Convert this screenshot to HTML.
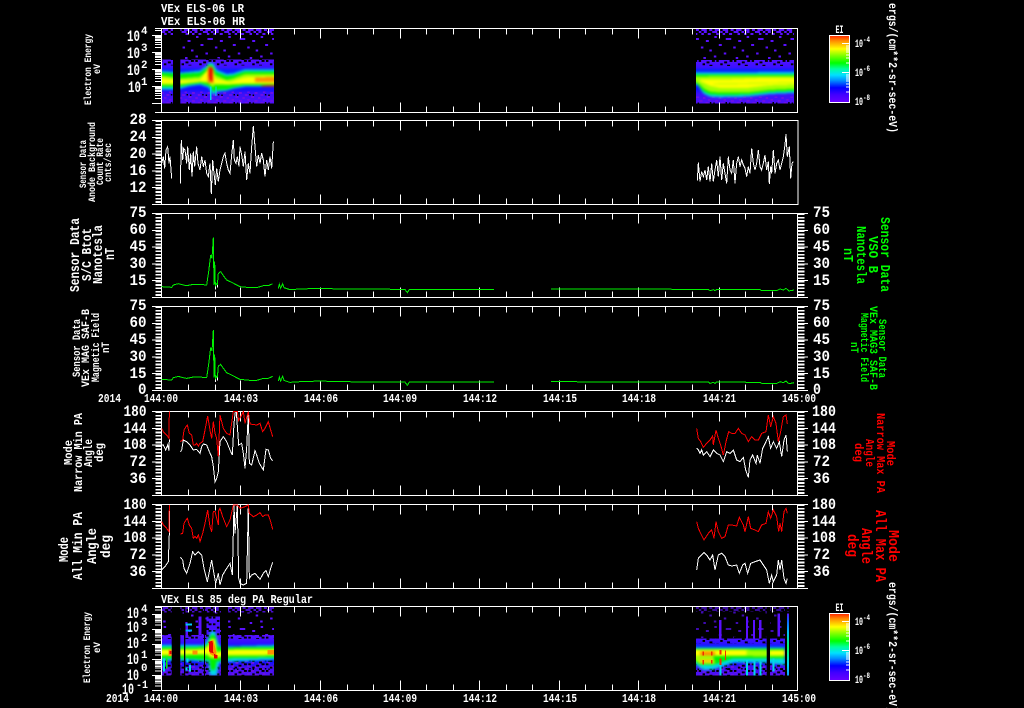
<!DOCTYPE html>
<html lang="en"><head><meta charset="utf-8"><title>VEx ELS summary plot</title>
<style>
html,body{margin:0;padding:0;background:#000;width:1024px;height:708px;overflow:hidden}
svg{display:block;shape-rendering:crispEdges}
text{font-family:"Liberation Mono","DejaVu Sans Mono",monospace;fill:#fff;font-weight:bold}
.n{font-size:16px}.t{font-size:12px}.s{font-size:11px}
.g{fill:#0f0}.r{fill:#f00}
</style></head><body>
<svg width="1024" height="708" viewBox="0 0 1024 708" xmlns="http://www.w3.org/2000/svg">
<defs>
<filter id="bl" x="-5%" y="-20%" width="110%" height="140%" color-interpolation-filters="sRGB"><feGaussianBlur stdDeviation="4"/></filter>
<pattern id="dn" patternUnits="userSpaceOnUse" width="64" height="18" x="0" y="87"><g fill="#5a10ff"><rect x="0" y="0" width="16" height="6"/><rect x="24" y="0" width="8" height="6"/><rect x="40" y="0" width="16" height="6"/><rect x="8" y="6" width="8" height="6"/><rect x="32" y="6" width="16" height="6"/><rect x="56" y="6" width="8" height="6"/><rect x="0" y="12" width="8" height="6"/><rect x="20" y="12" width="8" height="6"/><rect x="44" y="12" width="8" height="6"/></g></pattern>
<pattern id="sp" patternUnits="userSpaceOnUse" width="97" height="75" x="0" y="105"><g fill="#5a10ff"><rect x="6" y="3" width="8" height="6"/><rect x="40" y="9" width="16" height="6"/><rect x="78" y="15" width="8" height="6"/><rect x="20" y="27" width="8" height="6"/><rect x="62" y="34" width="8" height="6"/><rect x="88" y="44" width="8" height="6"/><rect x="34" y="52" width="8" height="6"/><rect x="4" y="62" width="8" height="6"/><rect x="70" y="66" width="8" height="6"/></g></pattern>
<pattern id="bk" patternUnits="userSpaceOnUse" width="53" height="20" x="0" y="0"><g fill="#000"><rect x="3" y="0" width="8" height="6"/><rect x="27" y="4" width="8" height="6"/><rect x="43" y="0" width="8" height="6"/><rect x="14" y="10" width="8" height="6"/><rect x="36" y="14" width="8" height="6"/></g></pattern>
<pattern id="mt" patternUnits="userSpaceOnUse" width="47" height="24" x="0" y="0"><g fill="#6a10e8"><rect x="2" y="0" width="8" height="6"/><rect x="22" y="3" width="8" height="6"/><rect x="36" y="9" width="8" height="6"/><rect x="12" y="12" width="8" height="6"/><rect x="30" y="18" width="8" height="6"/></g><g fill="#000"><rect x="42" y="18" width="5" height="5"/><rect x="6" y="19" width="5" height="5"/></g></pattern>
<linearGradient id="b1" gradientUnits="userSpaceOnUse" x1="0" x2="0" y1="175" y2="311"><stop offset="0" stop-color="#5a10ff"/><stop offset=".2" stop-color="#3a10ff"/><stop offset=".26" stop-color="#0a20ff"/><stop offset=".68" stop-color="#1010ff"/><stop offset=".78" stop-color="#3a10f8"/><stop offset="1" stop-color="#5010f8"/></linearGradient>
<linearGradient id="b7" gradientUnits="userSpaceOnUse" x1="0" x2="0" y1="135" y2="257"><stop offset="0" stop-color="#5a10ff"/><stop offset=".2" stop-color="#3010ff"/><stop offset=".28" stop-color="#0a20ff"/><stop offset=".66" stop-color="#1010ff"/><stop offset=".8" stop-color="#4010f0"/><stop offset="1" stop-color="#5010f8"/></linearGradient>
<linearGradient id="cb" x1="0" x2="0" y1="0" y2="1"><stop offset="0" stop-color="#ff2400"/><stop offset=".08" stop-color="#ff8c00"/><stop offset=".2" stop-color="#ffff00"/><stop offset=".3" stop-color="#80ff00"/><stop offset=".41" stop-color="#00ff00"/><stop offset=".5" stop-color="#00ffa0"/><stop offset=".59" stop-color="#00e0ff"/><stop offset=".67" stop-color="#0090ff"/><stop offset=".78" stop-color="#0000ff"/><stop offset=".88" stop-color="#4000ff"/><stop offset="1" stop-color="#6a00ff"/></linearGradient>
<linearGradient id="col" gradientUnits="userSpaceOnUse" x1="0" x2="0" y1="70" y2="257"><stop offset="0" stop-color="#5a10ff"/><stop offset=".12" stop-color="#1060ff"/><stop offset=".3" stop-color="#00c0ff"/><stop offset=".55" stop-color="#00ff60"/><stop offset=".82" stop-color="#00d8ff"/><stop offset="1" stop-color="#10a0ff"/></linearGradient>
<clipPath id="c1l"><rect x="485" y="87" width="34" height="224"/><rect x="541" y="87" width="281" height="224"/></clipPath>
<clipPath id="c1r"><rect x="48" y="87" width="294" height="224"/></clipPath>
<clipPath id="c7l"><rect x="485" y="50" width="30" height="207"/><rect x="541" y="50" width="11" height="207"/><rect x="556" y="50" width="56" height="207"/><rect x="615" y="50" width="48" height="207"/><rect x="684" y="50" width="138" height="207"/></clipPath>
<clipPath id="c7r"><rect x="48" y="50" width="212" height="207"/><rect x="270" y="50" width="45" height="207"/><rect x="321" y="50" width="6" height="207"/></clipPath>
<path id="xt" fill="none" stroke="#fff" d="M188.5 0v6M215.5 0v6M240.5 0v10M268.5 0v6M294.5 0v6M320.5 0v10M347.5 0v6M373.5 0v6M400.5 0v10M426.5 0v6M453.5 0v6M479.5 0v10M506.5 0v6M532.5 0v6M559.5 0v10M585.5 0v6M612.5 0v6M638.5 0v10M665.5 0v6M692.5 0v6M719.5 0v10M745.5 0v6M772.5 0v6M188.5 84v-6M215.5 84v-6M240.5 84v-10M268.5 84v-6M294.5 84v-6M320.5 84v-10M347.5 84v-6M373.5 84v-6M400.5 84v-10M426.5 84v-6M453.5 84v-6M479.5 84v-10M506.5 84v-6M532.5 84v-6M559.5 84v-10M585.5 84v-6M612.5 84v-6M638.5 84v-10M665.5 84v-6M692.5 84v-6M719.5 84v-10M745.5 84v-6M772.5 84v-6"/>
<g id="lad" fill="none" stroke="#fff">
<path stroke-width="6" stroke-dasharray="1.7 1.66" d="M158.5 0v84"/>
<path d="M152 0h9M152 16.8h9M152 33.6h9M152 50.4h9M152 67.2h9M152 84h9"/>
</g>
<g id="rad" fill="none" stroke="#fff">
<path stroke-width="7" stroke-dasharray="1.7 1.66" d="M801 0v84"/>
<path d="M798 0h10M798 16.8h10M798 33.6h10M798 50.4h10M798 67.2h10M798 84h10"/>
</g>
<path id="dec1" fill="none" stroke="#fff" d="M152 0h9M155 -5.1h6M155 -8.1h6M155 -10.2h6M155 -11.9h6M155 -13.2h6M155 -14.4h6M155 -15.4h6M155 -16.2h6"/>
<path id="dec7" fill="none" stroke="#fff" d="M152 0h9M155 -4.6h6M155 -7.3h6M155 -9.1h6M155 -10.6h6M155 -11.8h6M155 -12.9h6M155 -13.8h6M155 -14.5h6"/>
</defs>
<rect width="1024" height="708" fill="#000"/>

<!-- top titles -->
<text class="t" x="161" y="12" textLength="83" lengthAdjust="spacingAndGlyphs">VEx ELS-06 LR</text>
<text class="t" x="161" y="25" textLength="84" lengthAdjust="spacingAndGlyphs">VEx ELS-06 HR</text>
<text class="t" x="161" y="603" textLength="152" lengthAdjust="spacingAndGlyphs">VEx ELS 85 deg PA Regular</text>

<!-- spectrogram panel 1 left -->
<g transform="scale(.33333)"><g clip-path="url(#c1l)">
<rect x="485" y="87" width="340" height="18" fill="url(#dn)"/>
<rect x="541" y="105" width="281" height="75" fill="url(#sp)"/>
<rect x="485" y="178" width="340" height="133" fill="url(#b1)"/>
<rect x="485" y="174" width="340" height="22" fill="url(#bk)"/>
<rect x="485" y="275" width="340" height="36" fill="url(#mt)"/>
<g filter="url(#bl)">
<polygon fill="#00d8e8" points="470,212 541,218 600,212 620,198 625,188 640,190 650,210 680,222 700,220 735,208 840,208 840,258 735,260 700,266 680,272 650,275 640,285 625,262 600,254 570,258 541,266 520,268 470,268"/>
<polygon fill="#00f000" points="470,217 541,222 600,218 620,204 625,194 638,196 648,216 680,228 700,226 735,214 840,214 840,256 735,256 700,262 680,268 652,270 640,275 628,258 600,250 570,254 541,260 470,262"/>
<polygon fill="#a0ff00" points="470,224 541,235 600,230 618,215 625,198 638,200 645,225 680,240 700,235 735,222 840,222 840,252 735,252 700,254 680,255 645,255 638,262 626,250 600,246 570,250 541,254 470,255"/>
<polygon fill="#ffff00" points="470,232 541,242 600,240 620,212 640,212 645,236 690,246 735,232 840,228 840,250 735,250 690,252 645,250 636,252 622,245 600,245 541,250 470,250"/>
<polygon fill="#ff9000" points="622,205 640,205 640,250 622,248"/>
<polygon fill="#ff9000" points="765,233 840,230 840,246 765,246"/>
<polygon fill="#e80000" points="627,200 637,203 637,245 628,240"/>
<polygon fill="#f03000" points="785,256 840,255 840,260 785,259"/>
</g>
<path stroke="#00d8e8" stroke-width="4" d="M632 260v40M648 260v28"/>
</g></g>

<!-- spectrogram panel 1 right -->
<g transform="translate(680,0) scale(.33333)"><g clip-path="url(#c1r)">
<rect x="48" y="87" width="294" height="18" fill="url(#dn)"/>
<rect x="48" y="105" width="294" height="75" fill="url(#sp)"/>
<rect x="48" y="180" width="294" height="131" fill="url(#b1)"/>
<rect x="48" y="176" width="294" height="22" fill="url(#bk)"/>
<rect x="48" y="290" width="294" height="21" fill="url(#mt)"/>
<g filter="url(#bl)">
<polygon fill="#00d8e8" points="30,218 360,216 360,278 270,282 200,290 120,292 90,290 70,280 55,258 30,245"/>
<polygon fill="#00f000" points="30,224 360,224 360,272 270,276 200,284 120,285 90,283 70,274 55,255 30,240"/>
<polygon fill="#a0ff00" points="30,230 120,228 360,228 360,266 270,270 200,278 120,278 90,275 70,265 55,250 30,238"/>
<polygon fill="#ffff00" points="60,238 150,238 250,234 360,234 360,253 270,256 200,264 150,264 120,264 90,258 70,248 60,244"/>
<polygon fill="#c8ff00" points="100,250 340,246 340,250 100,254"/>
</g>
</g></g>

<!-- spectrogram panel 7 left -->
<g transform="translate(0,590) scale(.33333)"><g clip-path="url(#c7l)">
<rect x="485" y="50" width="340" height="18" fill="url(#dn)" opacity=".8"/>
<rect x="485" y="68" width="340" height="67" fill="url(#sp)"/>
<rect x="485" y="135" width="340" height="122" fill="url(#b7)"/>
<rect x="485" y="125" width="340" height="22" fill="url(#bk)"/>
<rect x="485" y="212" width="340" height="45" fill="url(#mt)"/>
<rect x="485" y="212" width="340" height="45" fill="url(#bk)"/>
<rect x="620" y="80" width="40" height="55" fill="#4a10ff"/>
<rect x="620" y="80" width="40" height="55" fill="url(#bk)"/>
<path stroke="#5a10ff" stroke-width="8" d="M600 80v55M560 100v35"/>
<rect x="556" y="100" width="20" height="6" fill="#00c8ff"/>
<rect x="556" y="118" width="20" height="6" fill="#00a0ff"/>
<g filter="url(#bl)">
<polygon fill="#00d8e8" points="470,165 612,165 625,145 632,125 645,125 655,160 663,172 684,170 840,165 840,208 684,215 663,215 656,225 650,257 630,257 625,215 580,212 541,212 470,212"/>
<polygon fill="#00f000" points="470,172 612,170 625,160 632,135 645,135 652,170 684,172 840,170 840,202 684,205 650,215 645,240 633,240 628,210 541,205 470,205"/>
<polygon fill="#a0ff00" points="470,178 612,176 628,160 632,145 645,145 650,185 684,178 840,176 840,197 684,198 650,205 632,205 620,195 470,197"/>
<polygon fill="#ffff00" points="470,180 612,180 628,165 632,150 645,150 650,190 684,180 840,180 840,193 684,193 650,200 632,198 620,190 470,195"/>
</g>
<g fill="#ff9000"><polygon points="505,178 515,178 515,198 505,198"/><polygon points="578,182 592,182 592,193 578,193"/><polygon points="626,155 640,150 650,190 640,198 628,190"/><polygon points="802,180 822,180 822,193 802,193"/></g>
<g fill="#e80000"><polygon points="626,155 638,152 640,190 628,186"/><polygon points="642,192 652,195 652,205 642,205"/><polygon points="508,183 515,183 515,192 508,192"/></g>
<path stroke="#00d8e8" stroke-width="6" d="M562 205v12M570 225v20M560 232v10M492 205v40"/>
<path stroke="#00f000" stroke-width="4" d="M500 205v30"/>
</g></g>

<!-- spectrogram panel 7 right -->
<g transform="translate(680,590) scale(.33333)"><g clip-path="url(#c7r)">
<rect x="48" y="50" width="280" height="14" fill="url(#dn)" opacity=".6"/>
<rect x="48" y="64" width="280" height="80" fill="url(#sp)" opacity=".7"/>
<rect x="48" y="145" width="280" height="112" fill="url(#b7)"/>
<rect x="48" y="140" width="280" height="20" fill="url(#bk)"/>
<rect x="48" y="212" width="280" height="45" fill="url(#mt)"/>
<rect x="48" y="212" width="280" height="45" fill="url(#bk)"/>
<path stroke="#5a10ff" stroke-width="7" d="M121 90v55M201 80v65M222 90v55M241 90v55M296 70v70"/>
<g filter="url(#bl)">
<polygon fill="#00d8e8" points="30,172 315,172 315,225 260,218 160,218 100,238 70,240 30,212"/>
<polygon fill="#00f000" points="30,175 315,175 315,205 160,205 100,225 60,225 30,205"/>
<polygon fill="#a0ff00" points="30,178 315,180 315,200 160,198 100,198 105,222 60,222 30,198"/>
<polygon fill="#ffff00" points="30,180 200,180 200,197 30,197"/>
<polygon fill="#ffff00" points="270,182 315,182 315,195 270,195"/>
<rect x="60" y="184" width="45" height="12" fill="#ff9000"/><rect x="60" y="208" width="40" height="10" fill="#ffc800"/>
</g>
<g fill="#f03000"><rect x="68" y="184" width="4" height="12"/><rect x="68" y="210" width="4" height="14"/><rect x="93" y="184" width="4" height="12"/><rect x="93" y="210" width="4" height="10"/><rect x="119" y="180" width="5" height="14"/><rect x="119" y="205" width="5" height="30"/><rect x="135" y="182" width="3" height="28"/></g>
<path stroke="#00d8e8" stroke-width="6" d="M122 225v32M201 210v47M224 215v42M242 215v42M280 205v40"/>
<rect x="321" y="70" width="6" height="187" fill="url(#col)"/>
</g></g>

<!-- panel frames -->
<g fill="none" stroke="#fff">
<path d="M155 28.5H797.5V112.5H155M161.5 28.5V112.5"/>
<path d="M155 120.5H798V204.5H155M161.5 120.5V204.5"/>
<path d="M152 213.5H808M152 297.5H808M161.5 213.5V297.5M797.5 213.5V297.5"/>
<path d="M152 306.5H808M152 390.5H808M161.5 306.5V390.5M797.5 306.5V390.5"/>
<path d="M152 411.5H808M152 495.5H808M161.5 411.5V495.5M797.5 411.5V495.5"/>
<path d="M152 504.5H808M152 588.5H808M161.5 504.5V588.5M797.5 504.5V588.5"/>
<path d="M155 606.5H797.5V690.5H155M161.5 606.5V690.5"/>
</g>
<use href="#xt" y="28.5"/><use href="#xt" y="120.5"/><use href="#xt" y="213.5"/><use href="#xt" y="306.5"/><use href="#xt" y="411.5"/><use href="#xt" y="504.5"/><use href="#xt" y="606.5"/>

<!-- left ladders -->
<use href="#lad" y="120.5"/><use href="#lad" y="213.5"/><use href="#lad" y="306.5"/><use href="#lad" y="411.5"/><use href="#lad" y="504.5"/>
<use href="#rad" y="213.5"/><use href="#rad" y="306.5"/><use href="#rad" y="411.5"/><use href="#rad" y="504.5"/>
<use href="#dec1" y="103.5"/><use href="#dec1" y="86.5"/><use href="#dec1" y="69.5"/><use href="#dec1" y="52.5"/>
<path fill="none" stroke="#fff" d="M152 35.5h9M155 30.5h6"/>
<use href="#dec7" y="690.5"/><use href="#dec7" y="675.5"/><use href="#dec7" y="659.5"/><use href="#dec7" y="644.5"/><use href="#dec7" y="629.5"/>
<path fill="none" stroke="#fff" d="M152 614.5h9M155 610h6M155 607.5h6"/>

<!-- panel 2 line -->
<g fill="none" stroke="#fff" stroke-width="3">
<g transform="scale(.33333)">
<polyline points="485,490 490,470 494,505 498,450 503,440 507,490 510,470 515,535"/>
<polyline points="541,550 544,420 548,480 551,445 555,450 560,490 563,440 568,510 572,460 576,530 580,455 584,500 590,440 594,490 600,510 605,470 610,500 615,480 620,520 625,530 630,490 634,582 638,480 642,520 646,555 650,505 655,545 660,510 665,490 670,470 675,460 680,490 685,510 690,520 695,465 700,420 703,480 708,490 712,470 717,500 720,440 725,465 730,500 735,455 740,540 745,490 750,520 755,440 760,378 765,440 770,500 775,465 780,490 785,460 790,480 795,530 800,480 805,510 810,470 815,505 820,425"/>
</g>
<g transform="translate(680,0) scale(.33333)">
<polyline points="52,542 55,488 60,545 65,515 70,530 75,510 80,540 85,500 90,545 95,490 100,545 105,510 110,480 115,530 120,470 125,540 130,490 135,520 140,550 145,470 150,510 155,520 160,480 165,550 170,490 175,470 180,500 185,480 190,495 195,505 200,530 205,500 210,520 215,445 220,490 225,510 230,490 235,450 240,500 245,510 250,490 255,465 260,510 265,485 268,552 272,500 275,520 280,450 285,520 290,490 295,480 300,510 305,490 310,470 315,435 318,402 322,470 328,440 332,535 336,490 340,485"/>
</g>
</g>

<!-- magnetic field -->
<g fill="none" stroke="#00f000" stroke-width="3" id="mag" transform="translate(0,205) scale(.33333)">
<polyline points="485,245 515,247 520,240 535,236 550,240 560,242 580,238 600,238 620,240 626,200 632,150 636,160 640,97 642,240 644,170 646,245 648,235 652,240 655,205 662,200 670,212 680,225 695,232 710,240 720,245 750,248 770,248 790,242 805,242 818,236"/>
<polyline points="835,250 838,238 842,250 848,236 852,248 870,254 900,252 960,250 1020,252 1215,253 1222,263 1228,253 1482,253"/>
<polyline points="1653,252 2125,253 2130,257 2140,254 2145,257 2150,253 2280,254 2285,257 2330,257 2340,252 2350,255 2358,250 2367,258 2382,255"/>
<path stroke="#fff" d="M646 245v8M652 240v8"/>
</g>
<use href="#mag" y="92.7"/>

<!-- panel 5 -->
<g fill="none" stroke-width="3">
<g transform="translate(0,400) scale(.33333)">
<g stroke="#fff">
<polyline points="485,135 490,135 497,150 503,135 507,152 508,118"/>
<polyline points="541,155 545,150 550,120 560,125 570,135 580,150 590,148 600,160 605,140 610,132 620,135 628,155 635,170 640,200 645,245 650,235 655,215 660,125 670,110 680,125 690,150 697,165 702,70 706,35 709,35 716,135 725,130 730,160 735,205 740,145 745,35 748,190 755,195 765,152 770,165 778,190 790,210 798,148 805,150 812,175 818,182"/>
</g>
<g stroke="#f00">
<polyline points="485,85 490,95 500,105 507,115 508,35"/>
<polyline points="541,125 548,120 552,90 558,80 562,75 568,100 575,105 580,135 585,135 590,130 595,138 600,130 608,125 615,90 623,48 630,90 635,115 640,65 645,100 650,115 655,170 660,45 665,65 670,85 680,100 690,105 700,35 712,35 716,62 730,35 735,70 745,35 750,72 770,75 780,70 788,95 795,85 805,65 812,90 818,110"/>
</g>
</g>
<g transform="translate(680,400) scale(.33333)">
<polyline stroke="#fff" points="50,145 55,150 60,160 65,150 70,165 80,155 90,170 100,150 110,160 120,165 130,185 140,155 150,160 160,150 170,180 180,185 190,172 197,210 205,232 210,180 218,165 228,190 232,165 240,190 248,145 258,125 265,110 272,145 280,125 290,145 298,125 305,170 312,120 318,105 322,155"/>
<polyline stroke="#f00" points="50,85 55,115 62,125 70,142 80,130 90,120 98,108 100,135 108,90 115,115 122,135 130,165 138,125 146,95 155,100 165,100 175,85 185,100 195,105 205,125 215,110 225,120 235,120 245,100 258,95 265,45 272,80 280,50 288,70 295,125 302,95 310,50 318,45 322,72"/>
</g>
<!-- panel 6 -->
<g transform="translate(0,400) scale(.33333)">
<g stroke="#fff">
<polyline points="485,510 495,500 505,485 508,400 508,315"/>
<polyline points="541,472 548,480 552,505 560,520 570,490 578,455 585,465 595,455 605,465 612,505 622,545 630,505 635,480 640,510 647,550 655,520 660,555 668,525 680,505 690,490 697,525 702,315 705,400 712,315 716,535 720,550 730,555 740,550 745,315 748,535 755,525 765,520 780,538 790,520 798,512 805,530 812,505 818,487"/>
</g>
<g stroke="#f00">
<polyline points="485,365 490,375 500,385 507,395 508,315"/>
<polyline points="541,402 548,400 552,370 558,360 562,355 568,375 575,385 580,415 585,410 590,415 595,405 600,425 608,400 615,370 623,330 630,380 635,395 640,335 645,335 655,375 655,335 660,325 668,350 680,380 690,360 700,315 712,315 720,325 735,320 745,315 748,340 760,350 770,345 780,338 788,350 795,345 805,345 812,365 818,388"/>
</g>
</g>
<g transform="translate(680,400) scale(.33333)">
<polyline stroke="#fff" points="50,510 55,475 65,465 72,458 80,465 90,480 98,465 105,510 115,465 125,460 135,470 145,495 155,498 170,495 178,520 188,495 195,490 203,520 212,490 225,485 240,480 250,495 260,510 268,550 275,525 280,545 290,525 295,480 300,510 305,480 312,535 318,550 322,535"/>
<polyline stroke="#f00" points="50,365 55,385 62,400 72,420 85,400 95,390 102,415 108,365 115,395 125,415 135,410 145,375 155,375 170,378 178,352 190,375 195,395 205,350 212,385 225,390 235,395 245,375 258,370 265,335 272,355 280,330 290,350 296,395 300,370 305,395 312,335 318,325 322,340"/>
</g>
</g>

<!-- Y tick labels left -->
<g>
<text class="n" x="127" y="41" textLength="13" lengthAdjust="spacingAndGlyphs">10</text><text class="s" x="141" y="34" textLength="6.5" lengthAdjust="spacingAndGlyphs">4</text>
<text class="n" x="127" y="58" textLength="13" lengthAdjust="spacingAndGlyphs">10</text><text class="s" x="141" y="51" textLength="6.5" lengthAdjust="spacingAndGlyphs">3</text>
<text class="n" x="127" y="75" textLength="13" lengthAdjust="spacingAndGlyphs">10</text><text class="s" x="141" y="68" textLength="6.5" lengthAdjust="spacingAndGlyphs">2</text>
<text class="n" x="128" y="92" textLength="13" lengthAdjust="spacingAndGlyphs">10</text><text class="s" x="141" y="85" textLength="6.5" lengthAdjust="spacingAndGlyphs">1</text>
<text class="n" x="129.5" y="124" textLength="17" lengthAdjust="spacingAndGlyphs">28</text>
<text class="n" x="129.5" y="141" textLength="17" lengthAdjust="spacingAndGlyphs">24</text>
<text class="n" x="129.5" y="158" textLength="17" lengthAdjust="spacingAndGlyphs">20</text>
<text class="n" x="129.5" y="175" textLength="17" lengthAdjust="spacingAndGlyphs">16</text>
<text class="n" x="129.5" y="192" textLength="17" lengthAdjust="spacingAndGlyphs">12</text>
<text class="n" x="129.5" y="217" textLength="17" lengthAdjust="spacingAndGlyphs">75</text>
<text class="n" x="129.5" y="234" textLength="17" lengthAdjust="spacingAndGlyphs">60</text>
<text class="n" x="129.5" y="251" textLength="17" lengthAdjust="spacingAndGlyphs">45</text>
<text class="n" x="129.5" y="268" textLength="17" lengthAdjust="spacingAndGlyphs">30</text>
<text class="n" x="129.5" y="285" textLength="17" lengthAdjust="spacingAndGlyphs">15</text>
<text class="n" x="129.5" y="310" textLength="17" lengthAdjust="spacingAndGlyphs">75</text>
<text class="n" x="129.5" y="327" textLength="17" lengthAdjust="spacingAndGlyphs">60</text>
<text class="n" x="129.5" y="344" textLength="17" lengthAdjust="spacingAndGlyphs">45</text>
<text class="n" x="129.5" y="361" textLength="17" lengthAdjust="spacingAndGlyphs">30</text>
<text class="n" x="129.5" y="378" textLength="17" lengthAdjust="spacingAndGlyphs">15</text>
<text class="n" x="138" y="394" textLength="8.5" lengthAdjust="spacingAndGlyphs">0</text>
<text class="n" x="123.5" y="416" textLength="23" lengthAdjust="spacingAndGlyphs">180</text>
<text class="n" x="123.5" y="433" textLength="23" lengthAdjust="spacingAndGlyphs">144</text>
<text class="n" x="123.5" y="449" textLength="23" lengthAdjust="spacingAndGlyphs">108</text>
<text class="n" x="129.5" y="466" textLength="17" lengthAdjust="spacingAndGlyphs">72</text>
<text class="n" x="129.5" y="483" textLength="17" lengthAdjust="spacingAndGlyphs">36</text>
<text class="n" x="123.5" y="509" textLength="23" lengthAdjust="spacingAndGlyphs">180</text>
<text class="n" x="123.5" y="526" textLength="23" lengthAdjust="spacingAndGlyphs">144</text>
<text class="n" x="123.5" y="542" textLength="23" lengthAdjust="spacingAndGlyphs">108</text>
<text class="n" x="129.5" y="559" textLength="17" lengthAdjust="spacingAndGlyphs">72</text>
<text class="n" x="129.5" y="576" textLength="17" lengthAdjust="spacingAndGlyphs">36</text>
<text class="n" x="127" y="618" textLength="12" lengthAdjust="spacingAndGlyphs">10</text><text class="s" x="141" y="612" textLength="6.5" lengthAdjust="spacingAndGlyphs">4</text>
<text class="n" x="127" y="632" textLength="12" lengthAdjust="spacingAndGlyphs">10</text><text class="s" x="141" y="625" textLength="6.5" lengthAdjust="spacingAndGlyphs">3</text>
<text class="n" x="127" y="648" textLength="12" lengthAdjust="spacingAndGlyphs">10</text><text class="s" x="141" y="641" textLength="6.5" lengthAdjust="spacingAndGlyphs">2</text>
<text class="n" x="127" y="664" textLength="12" lengthAdjust="spacingAndGlyphs">10</text><text class="s" x="141" y="658" textLength="6.5" lengthAdjust="spacingAndGlyphs">1</text>
<text class="n" x="127" y="680" textLength="12" lengthAdjust="spacingAndGlyphs">10</text><text class="s" x="141" y="671" textLength="6.5" lengthAdjust="spacingAndGlyphs">0</text>
<text class="n" x="122" y="694" textLength="12" lengthAdjust="spacingAndGlyphs">10</text><text class="s" x="136" y="688" textLength="12" lengthAdjust="spacingAndGlyphs">-1</text>
</g>

<!-- Y tick labels right -->
<text class="n" x="813" y="217" textLength="17" lengthAdjust="spacingAndGlyphs">75</text>
<text class="n" x="813" y="234" textLength="17" lengthAdjust="spacingAndGlyphs">60</text>
<text class="n" x="813" y="251" textLength="17" lengthAdjust="spacingAndGlyphs">45</text>
<text class="n" x="813" y="268" textLength="17" lengthAdjust="spacingAndGlyphs">30</text>
<text class="n" x="813" y="285" textLength="17" lengthAdjust="spacingAndGlyphs">15</text>
<text class="n" x="813" y="310" textLength="17" lengthAdjust="spacingAndGlyphs">75</text>
<text class="n" x="813" y="327" textLength="17" lengthAdjust="spacingAndGlyphs">60</text>
<text class="n" x="813" y="344" textLength="17" lengthAdjust="spacingAndGlyphs">45</text>
<text class="n" x="813" y="361" textLength="17" lengthAdjust="spacingAndGlyphs">30</text>
<text class="n" x="813" y="378" textLength="17" lengthAdjust="spacingAndGlyphs">15</text>
<text class="n" x="813" y="394" textLength="8" lengthAdjust="spacingAndGlyphs">0</text>
<text class="n" x="812" y="416" textLength="24" lengthAdjust="spacingAndGlyphs">180</text>
<text class="n" x="812" y="433" textLength="24" lengthAdjust="spacingAndGlyphs">144</text>
<text class="n" x="812" y="449" textLength="24" lengthAdjust="spacingAndGlyphs">108</text>
<text class="n" x="813" y="466" textLength="17" lengthAdjust="spacingAndGlyphs">72</text>
<text class="n" x="813" y="483" textLength="17" lengthAdjust="spacingAndGlyphs">36</text>
<text class="n" x="812" y="509" textLength="24" lengthAdjust="spacingAndGlyphs">180</text>
<text class="n" x="812" y="526" textLength="24" lengthAdjust="spacingAndGlyphs">144</text>
<text class="n" x="812" y="542" textLength="24" lengthAdjust="spacingAndGlyphs">108</text>
<text class="n" x="813" y="559" textLength="17" lengthAdjust="spacingAndGlyphs">72</text>
<text class="n" x="813" y="576" textLength="17" lengthAdjust="spacingAndGlyphs">36</text>

<!-- time labels -->
<g>
<text class="t" x="98" y="402" textLength="23" lengthAdjust="spacingAndGlyphs">2014</text>
<text class="t" x="144" y="402" textLength="34" lengthAdjust="spacingAndGlyphs">144:00</text>
<text class="t" x="224" y="402" textLength="34" lengthAdjust="spacingAndGlyphs">144:03</text>
<text class="t" x="304" y="402" textLength="34" lengthAdjust="spacingAndGlyphs">144:06</text>
<text class="t" x="383" y="402" textLength="34" lengthAdjust="spacingAndGlyphs">144:09</text>
<text class="t" x="463" y="402" textLength="34" lengthAdjust="spacingAndGlyphs">144:12</text>
<text class="t" x="543" y="402" textLength="34" lengthAdjust="spacingAndGlyphs">144:15</text>
<text class="t" x="622" y="402" textLength="34" lengthAdjust="spacingAndGlyphs">144:18</text>
<text class="t" x="703" y="402" textLength="33" lengthAdjust="spacingAndGlyphs">144:21</text>
<text class="t" x="782" y="402" textLength="34" lengthAdjust="spacingAndGlyphs">145:00</text>
<text class="t" x="106" y="702" textLength="23" lengthAdjust="spacingAndGlyphs">2014</text>
<text class="t" x="144" y="702" textLength="34" lengthAdjust="spacingAndGlyphs">144:00</text>
<text class="t" x="224" y="702" textLength="34" lengthAdjust="spacingAndGlyphs">144:03</text>
<text class="t" x="304" y="702" textLength="34" lengthAdjust="spacingAndGlyphs">144:06</text>
<text class="t" x="383" y="702" textLength="34" lengthAdjust="spacingAndGlyphs">144:09</text>
<text class="t" x="463" y="702" textLength="34" lengthAdjust="spacingAndGlyphs">144:12</text>
<text class="t" x="543" y="702" textLength="34" lengthAdjust="spacingAndGlyphs">144:15</text>
<text class="t" x="622" y="702" textLength="34" lengthAdjust="spacingAndGlyphs">144:18</text>
<text class="t" x="703" y="702" textLength="33" lengthAdjust="spacingAndGlyphs">144:21</text>
<text class="t" x="782" y="702" textLength="34" lengthAdjust="spacingAndGlyphs">145:00</text>
</g>

<!-- left rotated labels -->
<g>
<text font-size="10" transform="translate(91,105) rotate(-90)" textLength="71" lengthAdjust="spacingAndGlyphs">Electron Energy</text>
<text font-size="10" transform="translate(100,74) rotate(-90)" textLength="10" lengthAdjust="spacingAndGlyphs">eV</text>
<text font-size="10" transform="translate(86,188) rotate(-90)" textLength="48" lengthAdjust="spacingAndGlyphs">Sensor Data</text>
<text font-size="10" transform="translate(95,202) rotate(-90)" textLength="80" lengthAdjust="spacingAndGlyphs">Anode Background</text>
<text font-size="10" transform="translate(103,185) rotate(-90)" textLength="47" lengthAdjust="spacingAndGlyphs">Count Rate</text>
<text font-size="10" transform="translate(111,182) rotate(-90)" textLength="39" lengthAdjust="spacingAndGlyphs">cnts/sec</text>
<text font-size="14" transform="translate(79,292) rotate(-90)" textLength="74" lengthAdjust="spacingAndGlyphs">Sensor Data</text>
<text font-size="14" transform="translate(91,281) rotate(-90)" textLength="53" lengthAdjust="spacingAndGlyphs">S/C Btot</text>
<text font-size="14" transform="translate(102,284) rotate(-90)" textLength="59" lengthAdjust="spacingAndGlyphs">Nanotesla</text>
<text font-size="14" transform="translate(114,260) rotate(-90)" textLength="12" lengthAdjust="spacingAndGlyphs">nT</text>
<text font-size="11" transform="translate(80,377) rotate(-90)" textLength="58" lengthAdjust="spacingAndGlyphs">Sensor Data</text>
<text font-size="11" transform="translate(89,387) rotate(-90)" textLength="78" lengthAdjust="spacingAndGlyphs">VEx MAG SAF-B</text>
<text font-size="11" transform="translate(99,382) rotate(-90)" textLength="69" lengthAdjust="spacingAndGlyphs">Magnetic Field</text>
<text font-size="11" transform="translate(109,353) rotate(-90)" textLength="11" lengthAdjust="spacingAndGlyphs">nT</text>
<text font-size="12" transform="translate(72,465) rotate(-90)" textLength="25" lengthAdjust="spacingAndGlyphs">Mode</text>
<text font-size="12" transform="translate(82,492) rotate(-90)" textLength="79" lengthAdjust="spacingAndGlyphs">Narrow Min PA</text>
<text font-size="12" transform="translate(92,467) rotate(-90)" textLength="28" lengthAdjust="spacingAndGlyphs">Angle</text>
<text font-size="12" transform="translate(103,462) rotate(-90)" textLength="19" lengthAdjust="spacingAndGlyphs">deg</text>
<text font-size="14" transform="translate(68,562) rotate(-90)" textLength="25" lengthAdjust="spacingAndGlyphs">Mode</text>
<text font-size="14" transform="translate(82,580) rotate(-90)" textLength="68" lengthAdjust="spacingAndGlyphs">All Min PA</text>
<text font-size="14" transform="translate(96,564) rotate(-90)" textLength="36" lengthAdjust="spacingAndGlyphs">Angle</text>
<text font-size="14" transform="translate(110,558) rotate(-90)" textLength="23" lengthAdjust="spacingAndGlyphs">deg</text>
<text font-size="10" transform="translate(90,683) rotate(-90)" textLength="71" lengthAdjust="spacingAndGlyphs">Electron Energy</text>
<text font-size="10" transform="translate(100,653) rotate(-90)" textLength="11" lengthAdjust="spacingAndGlyphs">eV</text>
</g>

<!-- right rotated labels -->
<text font-size="12" transform="translate(889,3) rotate(90)" textLength="130" lengthAdjust="spacingAndGlyphs">ergs/(cm**2-sr-sec-eV)</text>
<text font-size="12" transform="translate(889,582) rotate(90)" textLength="130" lengthAdjust="spacingAndGlyphs">ergs/(cm**2-sr-sec-eV)</text>
<g>
<text class="g" font-size="14" transform="translate(881,217) rotate(90)" textLength="75" lengthAdjust="spacingAndGlyphs">Sensor Data</text>
<text class="g" font-size="14" transform="translate(869,236) rotate(90)" textLength="37" lengthAdjust="spacingAndGlyphs">VSO B</text>
<text class="g" font-size="14" transform="translate(857,226) rotate(90)" textLength="58" lengthAdjust="spacingAndGlyphs">Nanotesla</text>
<text class="g" font-size="14" transform="translate(844,248) rotate(90)" textLength="14" lengthAdjust="spacingAndGlyphs">nT</text>
<text class="g" font-size="11" transform="translate(879,319) rotate(90)" textLength="59" lengthAdjust="spacingAndGlyphs">Sensor Data</text>
<text class="g" font-size="11" transform="translate(870,306) rotate(90)" textLength="84" lengthAdjust="spacingAndGlyphs">VEx MAG3 SAF-B</text>
<text class="g" font-size="11" transform="translate(861,313) rotate(90)" textLength="69" lengthAdjust="spacingAndGlyphs">Magnetic Field</text>
<text class="g" font-size="11" transform="translate(851,342) rotate(90)" textLength="11" lengthAdjust="spacingAndGlyphs">nT</text>
<text class="r" font-size="12" transform="translate(887,441) rotate(90)" textLength="25" lengthAdjust="spacingAndGlyphs">Mode</text>
<text class="r" font-size="12" transform="translate(877,413) rotate(90)" textLength="80" lengthAdjust="spacingAndGlyphs">Narrow Max PA</text>
<text class="r" font-size="12" transform="translate(866,439) rotate(90)" textLength="28" lengthAdjust="spacingAndGlyphs">Angle</text>
<text class="r" font-size="12" transform="translate(855,443) rotate(90)" textLength="19" lengthAdjust="spacingAndGlyphs">deg</text>
<text class="r" font-size="15" transform="translate(889,530) rotate(90)" textLength="32" lengthAdjust="spacingAndGlyphs">Mode</text>
<text class="r" font-size="15" transform="translate(876,510) rotate(90)" textLength="72" lengthAdjust="spacingAndGlyphs">All Max PA</text>
<text class="r" font-size="15" transform="translate(862,528) rotate(90)" textLength="36" lengthAdjust="spacingAndGlyphs">Angle</text>
<text class="r" font-size="15" transform="translate(848,534) rotate(90)" textLength="23" lengthAdjust="spacingAndGlyphs">deg</text>
</g>

<!-- colour bars -->
<rect x="829.5" y="35.5" width="20" height="67" fill="url(#cb)" stroke="#fff"/>
<path fill="none" stroke="#fff" d="M842 43.5h7M846 46h3M846 48h3M846 50h3M846 52h3M846 55h3M846 58h3M846 63h3M842 72.5h7M846 75h3M846 77h3M846 79h3M846 81h3M846 84h3M846 87h3M846 92h3"/>
<text font-size="11" x="835.5" y="33" textLength="8" lengthAdjust="spacingAndGlyphs">EI</text>
<text font-size="11" x="855" y="47" textLength="8" lengthAdjust="spacingAndGlyphs">10</text><text font-size="8" x="863" y="42" textLength="7" lengthAdjust="spacingAndGlyphs">-4</text>
<text font-size="11" x="855" y="76" textLength="8" lengthAdjust="spacingAndGlyphs">10</text><text font-size="8" x="863" y="71" textLength="7" lengthAdjust="spacingAndGlyphs">-6</text>
<text font-size="11" x="855" y="105" textLength="8" lengthAdjust="spacingAndGlyphs">10</text><text font-size="8" x="863" y="100" textLength="7" lengthAdjust="spacingAndGlyphs">-8</text>

<rect x="829.5" y="613.5" width="20" height="67" fill="url(#cb)" stroke="#fff"/>
<path fill="none" stroke="#fff" d="M842 621.5h7M846 624h3M846 626h3M846 628h3M846 630h3M846 633h3M846 636h3M846 641h3M842 650.5h7M846 653h3M846 655h3M846 657h3M846 659h3M846 662h3M846 665h3M846 670h3"/>
<text font-size="11" x="835.5" y="611" textLength="8" lengthAdjust="spacingAndGlyphs">EI</text>
<text font-size="11" x="855" y="625" textLength="8" lengthAdjust="spacingAndGlyphs">10</text><text font-size="8" x="863" y="620" textLength="7" lengthAdjust="spacingAndGlyphs">-4</text>
<text font-size="11" x="855" y="654" textLength="8" lengthAdjust="spacingAndGlyphs">10</text><text font-size="8" x="863" y="649" textLength="7" lengthAdjust="spacingAndGlyphs">-6</text>
<text font-size="11" x="855" y="683" textLength="8" lengthAdjust="spacingAndGlyphs">10</text><text font-size="8" x="863" y="678" textLength="7" lengthAdjust="spacingAndGlyphs">-8</text>
</svg>
</body></html>
